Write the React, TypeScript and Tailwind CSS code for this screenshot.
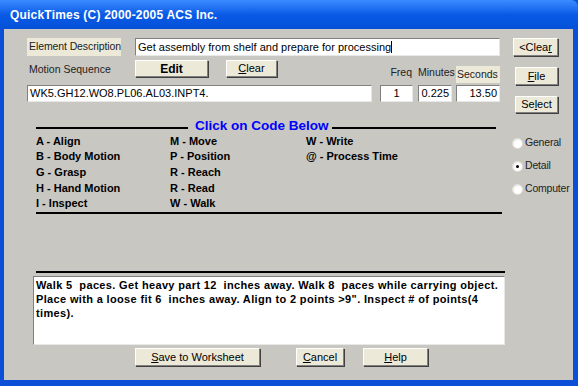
import React from 'react';

const font = { fontFamily: '"Liberation Sans", Arial, sans-serif' };

function XpButton({ children, className = '', bold = false }: { children: React.ReactNode; className?: string; bold?: boolean }) {
  return (
    <div
      className={`flex items-center justify-center bg-[#ece9d8] border border-t-white border-l-white border-b-[#808080] border-r-[#808080] shadow-[1px_1px_0_#404040] text-black whitespace-nowrap ${bold ? 'font-bold text-[12px]' : 'text-[11px]'} ${className}`}
    >
      {children}
    </div>
  );
}

function Field({ children, className = '' }: { children?: React.ReactNode; className?: string }) {
  return (
    <div
      className={`flex items-center bg-white border border-t-[#808080] border-l-[#808080] border-b-[#e8e8e8] border-r-[#e8e8e8] text-[11px] text-black px-[2px] whitespace-nowrap overflow-hidden ${className}`}
    >
      {children}
    </div>
  );
}

function Radio({ label, checked = false }: { label: string; checked?: boolean }) {
  return (
    <div className="flex items-center gap-[2px] h-[14px] text-[10.5px] tracking-[-0.2px] text-[#222] whitespace-nowrap">
      <div className="w-[11px] h-[11px] shrink-0 rounded-full bg-[radial-gradient(circle_at_60%_60%,#ffffff_45%,#d8d6d0_100%)] border border-[#e4e2dc] flex items-center justify-center">
        {checked && <div className="w-[3px] h-[3px] rounded-full bg-black" />}
      </div>
      <span>{label}</span>
    </div>
  );
}

const codes: string[][] = [
  ['A - Align', 'M - Move', 'W - Write'],
  ['B - Body Motion', 'P - Position', '@ - Process Time'],
  ['G - Grasp', 'R - Reach', ''],
  ['H - Hand Motion', 'R - Read', ''],
  ['I - Inspect', 'W - Walk', ''],
];

export default function App() {
  return (
    <div className="w-[578px] h-[386px] flex flex-col bg-[#0b52de]" style={font}>
      {/* title bar */}
      <div className="h-[29px] flex items-center pl-[10px] rounded-tr-[7px] bg-gradient-to-b from-[#3a8cff] via-[#0a5ae6] to-[#0551d8]">
        <span className="text-white font-bold text-[12px] tracking-[0.2px]">QuickTimes (C) 2000-2005 ACS Inc.</span>
      </div>

      {/* body */}
      <div className="flex-1 flex bg-[#c9c7c2] border-l-4 border-r-[5px] border-b-[6px] border-[#0b4fd8] pt-[9px] pl-[23px]">
        {/* main column */}
        <div className="w-[473px] flex flex-col">
          {/* row 1 */}
          <div className="flex h-[18px]">
            <div className="w-[94px] bg-[#ece9d8] flex items-center px-[2px] text-[10.5px] tracking-[-0.1px] text-[#222] whitespace-nowrap">Element Description</div>
            <Field className="ml-[14px] w-[365px]">
              Get assembly from shelf and prepare for processing<span className="inline-block w-[1px] h-[12px] bg-black" />
            </Field>
          </div>

          {/* row 2 */}
          <div className="flex mt-[4px] h-[25px]">
            <div className="w-[108px] pl-[2px] pt-[2px] text-[10.5px] text-[#222] whitespace-nowrap">Motion Sequence</div>
            <XpButton bold className="w-[73px] h-[17px]">Edit</XpButton>
            <XpButton className="ml-[18px] w-[51px] h-[17px]"><span><u>C</u>lear</span></XpButton>
            <div className="flex-1 flex items-end justify-end text-[10.5px] text-[#222] h-[23px] whitespace-nowrap">
              <span className="mr-[6px] pb-[2px]">Freq</span>
              <span className="w-[38px] pb-[2px]">Minutes</span>
              <span className="w-[44px] bg-[#ece9d8] h-[17px] pl-[1px] flex items-center">Seconds</span>
            </div>
          </div>

          {/* row 3 */}
          <div className="flex h-[17px]">
            <Field className="w-[345px]">WK5.GH12.WO8.PL06.AL03.INPT4.</Field>
            <Field className="ml-[8px] w-[33px] justify-center">1</Field>
            <Field className="ml-[5px] w-[34px] justify-end">0.225</Field>
            <Field className="ml-[4px] w-[44px] justify-end">13.50</Field>
          </div>

          {/* code section */}
          <div className="flex items-center mt-[17px] pl-[9px] h-[14px]">
            <div className="w-[152px] h-[2px] bg-black mt-[4px]" />
            <span className="ml-[7px] text-[#0000ff] font-bold text-[13.5px] leading-none whitespace-nowrap">Click on Code Below</span>
            <div className="ml-[3px] w-[164px] h-[2px] bg-black mt-[4px]" />
          </div>
          <div className="pl-[9px] flex flex-col">
            {codes.map((row, i) => (
              <div key={i} className="flex h-[15.7px] items-center text-[11px] font-bold text-black whitespace-nowrap">
                <span className="w-[134px]">{row[0]}</span>
                <span className="w-[136px]">{row[1]}</span>
                <span>{row[2]}</span>
              </div>
            ))}
          </div>
          <div className="ml-[9px] mt-[1px] w-[466px] h-[2px] bg-black" />

          {/* description */}
          <div className="ml-[9px] mt-[57px] w-[469px] h-[2px] bg-black" />
          <div className="ml-[6px] mt-[3px] w-[472px] h-[69px] bg-white border border-t-[#808080] border-l-[#808080] border-b-[#e8e8e8] border-r-[#e8e8e8] px-[2px] pt-[1px] text-[11px] tracking-[0.35px] font-bold leading-[14px] text-black">
            Walk 5&nbsp; paces. Get heavy part 12&nbsp; inches away. Walk 8&nbsp; paces while carrying object. Place with a loose fit 6&nbsp; inches away. Align to 2 points &gt;9". Inspect # of points(4 times).
          </div>

          {/* bottom buttons */}
          <div className="flex mt-[3px] pl-[108px]">
            <XpButton className="w-[125px] h-[18px]"><span><u>S</u>ave to Worksheet</span></XpButton>
            <XpButton className="ml-[36px] w-[48px] h-[18px]"><span><u>C</u>ancel</span></XpButton>
            <XpButton className="ml-[19px] w-[65px] h-[18px]"><span><u>H</u>elp</span></XpButton>
          </div>
        </div>

        {/* right column */}
        <div className="ml-[13px] flex flex-col">
          <XpButton className="w-[45px] h-[18px]"><span>&lt;Clea<u>r</u></span></XpButton>
          <XpButton className="mt-[11px] w-[43px] ml-[2px] h-[18px]"><span><u>F</u>ile</span></XpButton>
          <XpButton className="mt-[11px] w-[43px] ml-[2px] h-[17px]"><span>Se<u>l</u>ect</span></XpButton>
          <div className="mt-[23px] flex flex-col gap-[9px] -ml-[1px]">
            <Radio label="General" />
            <Radio label="Detail" checked />
            <Radio label="Computer" />
          </div>
        </div>
      </div>
    </div>
  );
}
